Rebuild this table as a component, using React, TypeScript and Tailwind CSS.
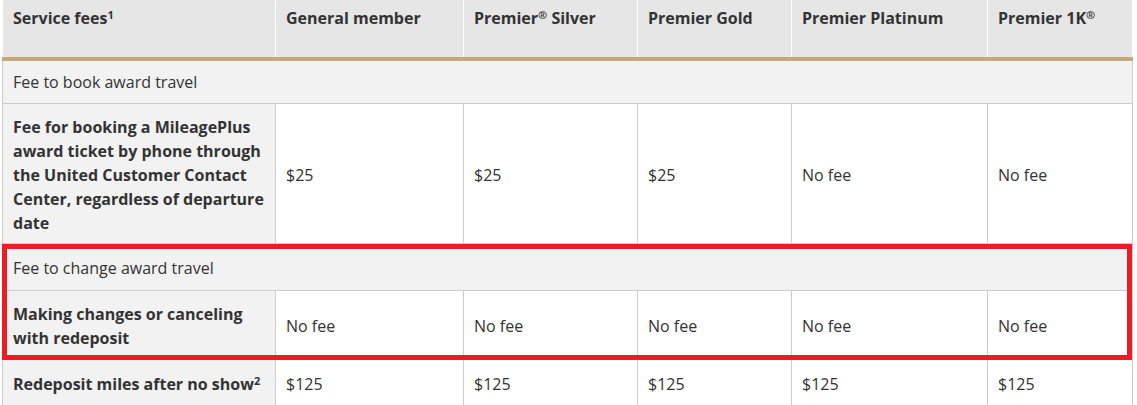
const cols = [273, 188, 174, 154, 196, 145];

const headers: React.ReactNode[] = [
  <>Service fees<sup className="text-[11px]">1</sup></>,
  'General member',
  <>Premier<sup className="text-[11px]">®</sup> Silver</>,
  'Premier Gold',
  'Premier Platinum',
  <>Premier 1K<sup className="text-[11px]">®</sup></>,
];

const th = 'border-x border-white px-[10px] pt-[6px] align-top text-left font-bold';
const label = 'border border-[#cccccc] bg-[#f2f2f2] px-[10px] pt-[4px] align-middle text-left font-bold';
const cell = 'border border-[#cccccc] bg-white px-[10px] pt-[4px] align-middle';

export default function App() {
  return (
    <div
      className="relative min-h-[405px] w-[1137px] overflow-hidden bg-white text-[16px] leading-6 text-[#333333]"
      style={{ fontFamily: '"Open Sans", "Noto Sans", sans-serif' }}
    >
      <table className="ml-[2px] w-[1130px] table-fixed border-collapse">
        <colgroup>
          {cols.map((w, i) => (
            <col key={i} style={{ width: w }} />
          ))}
        </colgroup>
        <thead>
          <tr className="h-[59px] border-b-4 border-b-[#c6a87f] bg-[#e6e6e6]">
            {headers.map((h, i) => (
              <th key={i} className={th}>
                {h}
              </th>
            ))}
          </tr>
        </thead>
        <tbody>
          <tr className="h-[44px]">
            <td colSpan={6} className="border border-[#cccccc] bg-[#f2f2f2] px-[10px]">
              Fee to book award travel
            </td>
          </tr>
          <tr className="h-[140px]">
            <th className={label}>
              Fee for booking a MileagePlus award ticket by phone through the United Customer Contact
              Center, regardless of departure date
            </th>
            <td className={cell}>$25</td>
            <td className={cell}>$25</td>
            <td className={cell}>$25</td>
            <td className={cell}>No fee</td>
            <td className={cell}>No fee</td>
          </tr>
          <tr className="h-[47px]">
            <td colSpan={6} className="border border-[#cccccc] bg-[#f2f2f2] px-[10px] pt-[3px]">
              Fee to change award travel
            </td>
          </tr>
          <tr className="h-[68px]">
            <th className={label}>Making changes or canceling with redeposit</th>
            <td className={cell}>No fee</td>
            <td className={cell}>No fee</td>
            <td className={cell}>No fee</td>
            <td className={cell}>No fee</td>
            <td className={cell}>No fee</td>
          </tr>
          <tr className="h-[48px]">
            <th className={label}>
              Redeposit miles after no show<sup className="text-[11px]">2</sup>
            </th>
            <td className={cell}>$125</td>
            <td className={cell}>$125</td>
            <td className={cell}>$125</td>
            <td className={cell}>$125</td>
            <td className={cell}>$125</td>
          </tr>
        </tbody>
      </table>
      {/* highlight box drawn over the change-fee rows */}
      <div className="pointer-events-none absolute left-[2px] top-[244px] h-[116px] w-[1130px] border-[5px] border-[#ed1c24]" />
    </div>
  );
}
